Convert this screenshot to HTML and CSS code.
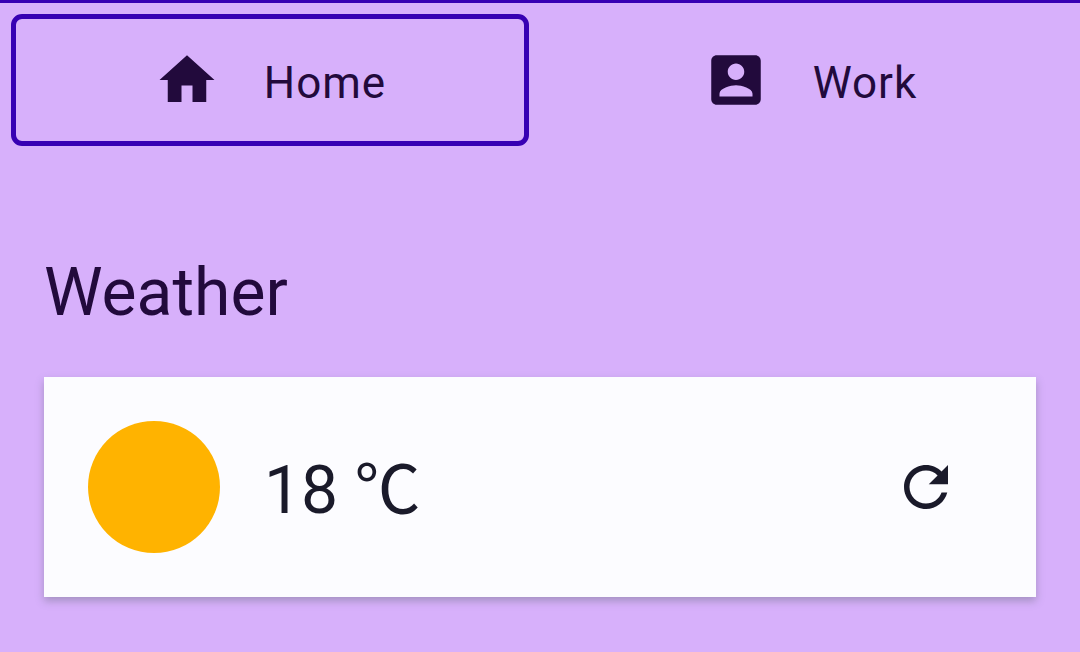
FILE: index.html
```html
<!DOCTYPE html>
<html lang="en">
<head>
    <meta charset="UTF-8">
    <meta name="viewport" content="width=device-width, initial-scale=1.0">
    <title>Home</title>
    <link rel="stylesheet" href="styles.css">
</head>
<body>
    <nav class="tabs">
        <button class="tab active" type="button">
            <svg class="icon" viewBox="0 0 24 24" aria-hidden="true">
                <path d="M10 20v-6h4v6h5v-8h3L12 3 2 12h3v8z"/>
            </svg>
            <span class="label">Home</span>
        </button>
        <button class="tab" type="button">
            <svg class="icon" viewBox="0 0 24 24" aria-hidden="true">
                <path d="M3 5v14c0 1.1.89 2 2 2h14c1.1 0 2-.9 2-2V5c0-1.1-.9-2-2-2H5c-1.11 0-2 .9-2 2zm12 4c0 1.66-1.34 3-3 3s-3-1.34-3-3 1.34-3 3-3 3 1.34 3 3zm-9 8c0-2 4-3.1 6-3.1s6 1.1 6 3.1v1H6v-1z"/>
            </svg>
            <span class="label">Work</span>
        </button>
    </nav>

    <main class="content">
        <h1 class="title">Weather</h1>
        <section class="card">
            <div class="sun"></div>
            <div class="temperature">18 ℃</div>
            <button class="refresh" type="button" aria-label="Refresh">
                <svg class="icon" viewBox="0 0 24 24" aria-hidden="true">
                    <path d="M17.65 6.35C16.2 4.9 14.21 4 12 4c-4.42 0-7.99 3.58-7.99 8s3.57 8 7.99 8c3.73 0 6.84-2.55 7.73-6h-2.08c-.82 2.33-3.04 4-5.65 4-3.31 0-6-2.69-6-6s2.69-6 6-6c1.66 0 3.14.69 4.22 1.78L13 11h7V4l-2.35 2.35z"/>
                </svg>
            </button>
        </section>
    </main>
</body>
</html>
```
FILE: styles.css
```css
* {
    box-sizing: border-box;
}
body {
    margin: 0;
    border-top: 3px solid #3700b3;
    background: #d7b0fb;
    color: #220a3c;
    font-family: Roboto, "Liberation Sans", "Noto Sans CJK JP", sans-serif;
}
button {
    padding: 0;
    border: none;
    background: none;
    color: inherit;
    font: inherit;
}
.icon {
    width: 66px;
    height: 66px;
    fill: currentColor;
}
.tabs {
    display: grid;
    grid-template-columns: 1fr 1fr;
    gap: 22px;
    padding: 11px;
}
.tab {
    display: flex;
    justify-content: center;
    align-items: center;
    gap: 44px;
    height: 132px;
    border: 5px solid transparent;
    border-radius: 11px;
    font-size: 44px;
    letter-spacing: 1px;
}
.tab.active {
    border-color: #3700b3;
}
.label {
    padding-top: 6px;
}
.content {
    padding: 96px 44px 44px;
}
.title {
    margin: 0 0 44px;
    font-size: 66px;
    font-weight: 400;
    line-height: 80px;
}
.card {
    display: flex;
    align-items: center;
    padding: 44px;
    background: #fcfcff;
    color: #1a1a2a;
    box-shadow: 0 4px 8px rgba(90, 100, 110, 0.4);
}
.sun {
    width: 132px;
    height: 132px;
    border-radius: 50%;
    background: #ffb300;
}
.temperature {
    flex: 1;
    margin-left: 44px;
    padding-top: 8px;
    font-size: 66px;
    line-height: 80px;
}
.refresh {
    display: flex;
    justify-content: center;
    align-items: center;
    width: 132px;
    height: 132px;
}
```
